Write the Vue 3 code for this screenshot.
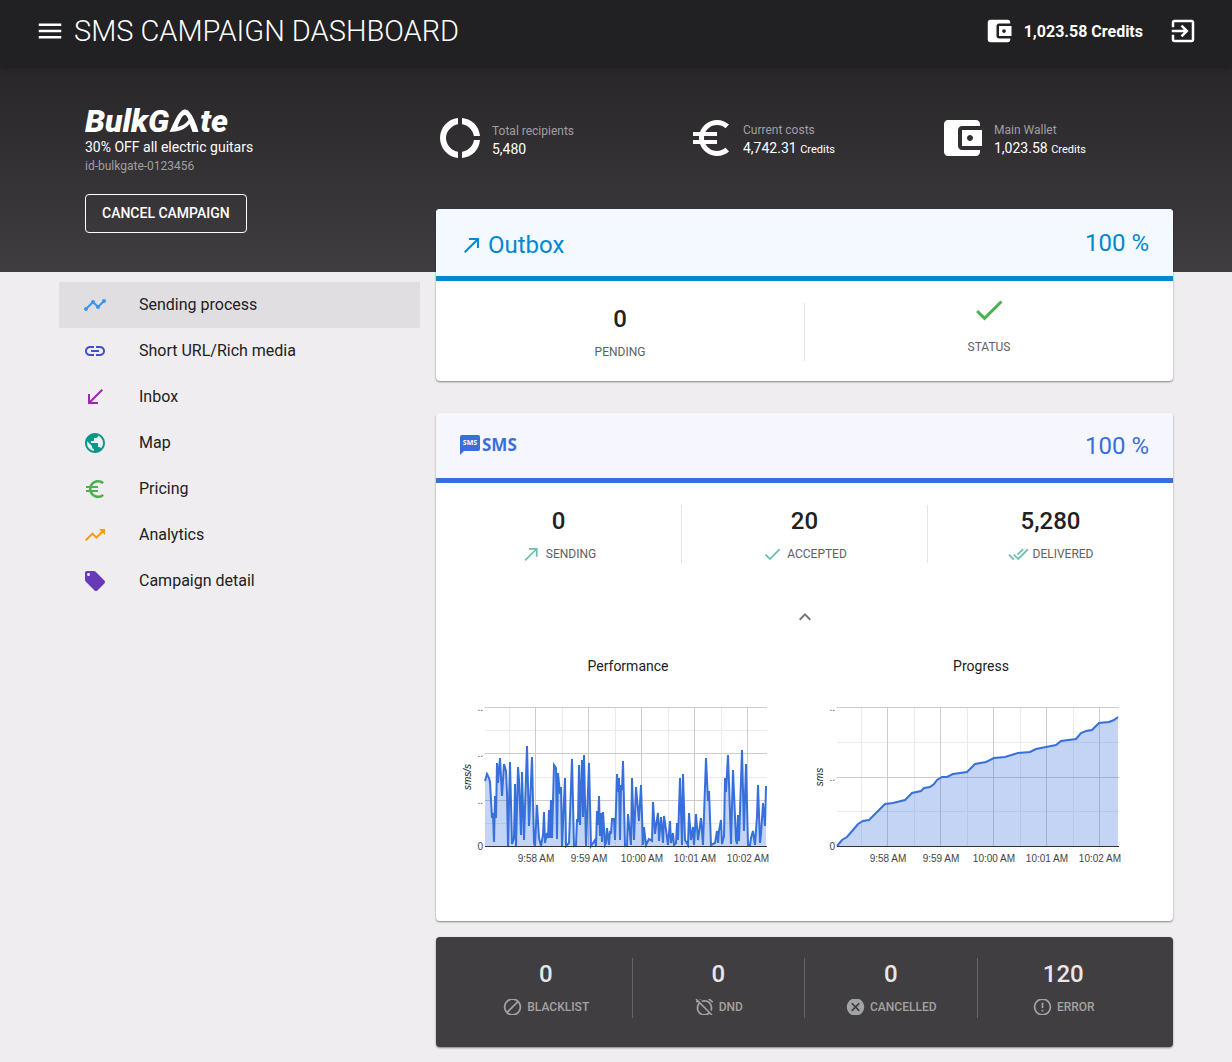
<script setup>
const icons = {
  menu: 'M3 18h18v-2H3v2zm0-5h18v-2H3v2zm0-7v2h18V6H3z',
  wallet: 'M21 18v1c0 1.1-.9 2-2 2H5c-1.11 0-2-.9-2-2V5c0-1.1.89-2 2-2h14c1.1 0 2 .9 2 2v1h-9c-1.11 0-2 .9-2 2v8c0 1.1.89 2 2 2h9zm-9-2h10V8H12v8zm4-2.5c-.83 0-1.5-.67-1.5-1.5s.67-1.5 1.5-1.5 1.5.67 1.5 1.5-.67 1.5-1.5 1.5z',
  exit: 'M10.09 15.59L11.5 17l5-5-5-5-1.41 1.41L12.67 11H3v2h9.67l-2.58 2.59zM19 3H5c-1.11 0-2 .9-2 2v4h2V5h14v14H5v-4H3v4c0 1.1.89 2 2 2h14c1.1 0 2-.9 2-2V5c0-1.1-.9-2-2-2z',
  donut: 'M11 5.08V2c-5 .5-9 4.81-9 10s4 9.5 9 10v-3.08c-3-.48-6-3.4-6-6.92s3-6.44 6-6.92zM18.97 11H22c-.47-5-4-8.53-9-9v3.08C16 5.51 18.54 8 18.97 11zM13 18.92V22c5-.47 8.53-4 9-9h-3.03c-.43 3-2.97 5.49-5.97 5.92z',
  euro: 'M15 18.5c-2.51 0-4.68-1.42-5.76-3.5H15v-2H8.58c-.05-.33-.08-.66-.08-1s.03-.67.08-1H15V9H9.24C10.32 6.92 12.5 5.5 15 5.5c1.61 0 3.09.59 4.23 1.57L21 5.3C19.41 3.87 17.3 3 15 3c-3.92 0-7.24 2.51-8.48 6H3v2h3.06c-.04.33-.06.66-.06 1s.02.67.06 1H3v2h3.52c1.24 3.49 4.56 6 8.48 6 2.31 0 4.41-.87 6-2.3l-1.78-1.77c-1.13.98-2.6 1.57-4.22 1.57z',
  outgoing: 'M9 5v2h6.59L4 18.59 5.41 20 17 8.41V15h2V5z',
  incoming: 'M20 5.41L18.59 4 7 15.59V9H5v10h10v-2H8.41z',
  timeline: 'M23 8c0 1.1-.9 2-2 2-.18 0-.35-.02-.51-.07l-3.56 3.55c.05.16.07.34.07.52 0 1.1-.9 2-2 2s-2-.9-2-2c0-.18.02-.36.07-.52l-2.55-2.55c-.16.05-.34.07-.52.07s-.36-.02-.52-.07l-4.55 4.56c.05.16.07.33.07.51 0 1.1-.9 2-2 2s-2-.9-2-2 .9-2 2-2c.18 0 .35.02.51.07l4.56-4.55C8.02 9.36 8 9.18 8 9c0-1.1.9-2 2-2s2 .9 2 2c0 .18-.02.36-.07.52l2.55 2.55c.16-.05.34-.07.52-.07s.36.02.52.07l3.55-3.56C19.02 8.35 19 8.18 19 8c0-1.1.9-2 2-2s2 .9 2 2z',
  link: 'M3.9 12c0-1.71 1.39-3.1 3.1-3.1h4V7H7c-2.76 0-5 2.24-5 5s2.24 5 5 5h4v-1.9H7c-1.71 0-3.1-1.39-3.1-3.1zM8 13h8v-2H8v2zm9-6h-4v1.9h4c1.71 0 3.1 1.39 3.1 3.1s-1.39 3.1-3.1 3.1h-4V17h4c2.76 0 5-2.24 5-5s-2.24-5-5-5z',
  globe: 'M12 2C6.48 2 2 6.48 2 12s4.48 10 10 10 10-4.48 10-10S17.52 2 12 2zm-1 17.93c-3.95-.49-7-3.85-7-7.93 0-.62.08-1.21.21-1.79L9 15v1c0 1.1.9 2 2 2v1.93zm6.9-2.54c-.26-.81-1-1.39-1.9-1.39h-1v-3c0-.55-.45-1-1-1H8v-2h2c.55 0 1-.45 1-1V7h2c1.1 0 2-.9 2-2v-.41c2.93 1.19 5 4.06 5 7.41 0 2.08-.8 3.97-2.1 5.39z',
  trending: 'M16 6l2.29 2.29-4.88 4.88-4-4L2 16.59 3.41 18l6-6 4 4 6.3-6.29L22 12V6z',
  tag: 'M21.41 11.58l-9-9C12.05 2.22 11.55 2 11 2H4c-1.1 0-2 .9-2 2v7c0 .55.22 1.05.59 1.42l9 9c.36.36.86.58 1.41.58.55 0 1.05-.22 1.41-.59l7-7c.37-.36.59-.86.59-1.41 0-.55-.23-1.06-.59-1.42zM5.5 7C4.67 7 4 6.33 4 5.5S4.67 4 5.5 4 7 4.67 7 5.5 6.33 7 5.5 7z',
  check: 'M9 16.17L4.83 12l-1.42 1.41L9 19 21 7l-1.41-1.41z',
  checkAll: 'M18 7l-1.41-1.41-6.34 6.34 1.41 1.41L18 7zm4.24-1.41L11.66 16.17 7.48 12l-1.41 1.41L11.66 19l12-12-1.42-1.41zM.41 13.41L6 19l1.41-1.41L1.83 12 .41 13.41z',
  collapse: 'M12 8l-6 6 1.41 1.41L12 10.83l4.59 4.58L18 14z',
  blocked: 'M12 2C6.5 2 2 6.5 2 12s4.5 10 10 10 10-4.5 10-10S17.5 2 12 2zM4 12c0-4.4 3.6-8 8-8 1.8 0 3.5.6 4.9 1.7L5.7 16.9C4.6 15.5 4 13.8 4 12zm8 8c-1.8 0-3.5-.6-4.9-1.7L18.3 7.1C19.4 8.5 20 10.2 20 12c0 4.4-3.6 8-8 8z',
  alarmOff: 'M12 6c3.87 0 7 3.13 7 7 0 .84-.16 1.65-.43 2.4l1.52 1.52c.58-1.19.91-2.51.91-3.92 0-4.97-4.03-9-9-9-1.41 0-2.73.33-3.92.91L9.6 6.43C10.35 6.16 11.16 6 12 6zm10-.28l-4.6-3.86-1.29 1.53 4.6 3.86L22 5.72zM2.92 2.29L1.65 3.57 2.98 4.9l-1.11.93 1.42 1.42 1.11-.94.8.8C3.83 8.69 3 10.75 3 13c0 4.97 4.02 9 9 9 2.25 0 4.31-.83 5.89-2.2l2.2 2.2 1.27-1.27L3.89 3.27l-.97-.98zm13.55 16.1C15.26 19.39 13.7 20 12 20c-3.87 0-7-3.13-7-7 0-1.7.61-3.26 1.61-4.47l9.86 9.86zM8.02 3.28L6.6 1.86l-.86.71 1.42 1.42.86-.71z',
  cancel: 'M12 2C6.47 2 2 6.47 2 12s4.47 10 10 10 10-4.47 10-10S17.53 2 12 2zm5 13.59L15.59 17 12 13.41 8.41 17 7 15.59 10.59 12 7 8.41 8.41 7 12 10.59 15.59 7 17 8.41 13.41 12 17 15.59z',
  error: 'M11 15h2v2h-2zm0-8h2v6h-2zm.99-5C6.47 2 2 6.48 2 12s4.47 10 9.99 10C17.52 22 22 17.52 22 12S17.52 2 11.99 2zM12 20c-4.42 0-8-3.58-8-8s3.58-8 8-8 8 3.58 8 8-3.58 8-8 8z',
}

const summary = [
  { icon: 'donut', label: 'Total recipients', value: '5,480' },
  { icon: 'euro', label: 'Current costs', value: '4,742.31', unit: 'Credits' },
  { icon: 'wallet', label: 'Main Wallet', value: '1,023.58', unit: 'Credits' },
]

const nav = [
  { icon: 'timeline', label: 'Sending process', tone: 'blue', active: true },
  { icon: 'link', label: 'Short URL/Rich media', tone: 'indigo' },
  { icon: 'incoming', label: 'Inbox', tone: 'purple' },
  { icon: 'globe', label: 'Map', tone: 'teal' },
  { icon: 'euro', label: 'Pricing', tone: 'green' },
  { icon: 'trending', label: 'Analytics', tone: 'orange' },
  { icon: 'tag', label: 'Campaign detail', tone: 'violet' },
]

const smsCounters = [
  { icon: 'outgoing', label: 'SENDING', value: '0' },
  { icon: 'check', label: 'ACCEPTED', value: '20' },
  { icon: 'checkAll', label: 'DELIVERED', value: '5,280' },
]

const failures = [
  { icon: 'blocked', label: 'BLACKLIST', value: '0' },
  { icon: 'alarmOff', label: 'DND', value: '0' },
  { icon: 'cancel', label: 'CANCELLED', value: '0' },
  { icon: 'error', label: 'ERROR', value: '120' },
]

const performance = [
  [0, 65], [2, 72], [4, 68], [5, 64], [7, 28], [8, 33], [9, 4], [10, 50], [11, 28], [12, 83], [13, 63], [15, 88],
  [17, 50], [19, 82], [21, 75], [22, 53], [23, 0], [25, 84], [27, 2], [29, 8], [30, 62], [31, 0], [33, 79], [34, 66],
  [36, 11], [37, 74], [39, 6], [42, 100], [44, 20], [46, 65], [47, 89], [49, 3], [50, 0], [52, 41], [54, 8], [56, 0],
  [58, 11], [59, 34], [60, 3], [62, 13], [63, 8], [64, 36], [65, 8], [66, 46], [67, 8], [69, 81], [71, 78], [72, 7], [73, 73],
  [75, 52], [76, 59], [77, 0], [80, 68], [81, 0], [84, 3], [87, 87], [89, 0], [91, 1], [92, 27], [93, 24], [94, 81], [95, 21],
  [97, 86], [98, 29], [99, 91], [101, 0], [104, 83], [106, 0], [110, 6], [111, 0], [112, 35], [113, 21], [114, 50],
  [115, 10], [116, 33], [117, 4], [118, 34], [120, 1], [121, 3], [122, 18], [124, 1], [125, 15], [126, 12], [127, 27],
  [129, 27], [130, 6], [132, 72], [133, 54], [134, 68], [135, 6], [136, 61], [137, 56], [138, 85], [140, 0], [142, 1], [143, 32], [146, 1],
  [147, 68], [149, 6], [151, 59], [154, 25], [156, 61], [158, 1], [159, 19], [161, 1], [164, 7], [167, 5], [168, 44],
  [170, 12], [171, 20], [173, 33], [174, 5], [176, 29], [178, 3], [179, 30], [181, 16], [183, 1], [185, 25], [186, 3],
  [188, 13], [189, 1], [191, 3], [192, 23], [193, 6], [195, 68], [197, 1], [198, 72], [200, 6], [203, 1], [204, 33],
  [206, 6], [208, 19], [209, 1], [211, 32], [213, 6], [216, 28], [218, 1], [221, 88], [223, 45], [224, 55], [226, 1],
  [230, 3], [232, 15], [233, 3], [234, 15], [236, 26], [237, 2], [239, 10], [240, 68], [241, 54], [243, 91], [244, 63], [246, 2], [248, 76],
  [251, 6], [252, 2], [253, 31], [254, 5], [257, 96], [259, 15], [261, 82], [263, 1], [265, 1], [266, 8], [268, 15],
  [270, 1], [272, 30], [273, 61], [275, 3], [276, 12], [278, 43], [280, 20], [281, 60],
]

const progress = [
  [0, 0], [5, 6], [10, 9], [16, 16], [21, 22], [26, 25], [32, 26], [39, 33], [48, 42], [56, 43], [68, 46], [75, 53],
  [84, 55], [87, 58], [93, 59], [97, 62], [100, 66], [105, 69], [110, 69], [116, 72], [130, 74], [138, 82], [149, 84],
  [157, 88], [168, 89], [181, 93], [193, 94], [199, 97], [209, 99], [219, 101], [224, 105], [239, 107], [244, 113],
  [249, 115], [255, 116], [262, 123], [272, 124], [277, 126], [281, 129],
]

const times = ['9:58 AM', '9:59 AM', '10:00 AM', '10:01 AM', '10:02 AM']

const charts = [
  { title: 'Performance', unit: 'sms/s', data: performance, left: 33, major: [17, 63, 110], minor: [40, 87, 133] },
  { title: 'Progress', unit: 'sms', data: progress, left: 32, major: [17, 87], minor: [52, 121] },
]

const baseline = 156
const line = (c) => c.data.map(([x, h]) => `${c.left + x},${baseline - h}`).join(' ')
const area = (c) => `${c.left},${baseline} ${line(c)} ${c.left + 281},${baseline}`
</script>

<template>
  <div class="page">
    <header class="topbar">
      <button class="plain" type="button" aria-label="Menu">
        <svg class="icon-30" viewBox="0 0 24 24"><path :d="icons.menu" /></svg>
      </button>
      <h1>SMS CAMPAIGN DASHBOARD</h1>
      <div class="balance">
        <svg class="icon-30" viewBox="0 0 24 24"><path :d="icons.wallet" /></svg>
        <span>1,023.58 Credits</span>
      </div>
      <a class="exit" href="#" aria-label="Sign out">
        <svg class="icon-30" viewBox="0 0 24 24"><path :d="icons.exit" /></svg>
      </a>
    </header>

    <section class="hero columns">
      <div class="campaign">
        <div class="logo" aria-label="BulkGate">
          <span>BulkG</span>
          <svg viewBox="0 0 30 24" aria-hidden="true">
            <path d="M0 23C4 14 8 5 12 2C14 0 17 0 19 2C23 6 27 15 29 23H23C22 20 21 17 20 15C16 20 9 23 0 23ZM8 18C12 17 16 15 19 11C18 8 17 6 15 6C13 6 10 12 8 18Z" />
          </svg>
          <span>te</span>
        </div>
        <p class="offer">30% OFF all electric guitars</p>
        <p class="campaign-id">id-bulkgate-0123456</p>
        <button class="cancel" type="button">CANCEL CAMPAIGN</button>
      </div>
      <div class="summary">
        <div v-for="s in summary" :key="s.label" class="summary-item">
          <svg viewBox="0 0 24 24"><path :d="icons[s.icon]" /></svg>
          <div class="summary-text">
            <p class="summary-label">{{ s.label }}</p>
            <p class="summary-value">{{ s.value }} <small v-if="s.unit">{{ s.unit }}</small></p>
          </div>
        </div>
      </div>
    </section>

    <div class="columns">
      <nav class="sidebar">
        <a v-for="n in nav" :key="n.label" href="#" :class="{ active: n.active }">
          <svg :class="n.tone" viewBox="0 0 24 24"><path :d="icons[n.icon]" /></svg>
          <span>{{ n.label }}</span>
        </a>
      </nav>

      <main>
        <section class="card outbox">
          <div class="card-head">
            <h2>
              <svg viewBox="0 0 24 24"><path :d="icons.outgoing" /></svg>
              <span>Outbox</span>
            </h2>
            <span class="percent">100 %</span>
          </div>
          <div class="counters">
            <div class="counter">
              <strong>0</strong>
              <span class="label">PENDING</span>
            </div>
            <div class="counter status">
              <svg viewBox="0 0 24 24"><path :d="icons.check" /></svg>
              <span class="label">STATUS</span>
            </div>
          </div>
        </section>

        <section class="card sms">
          <div class="card-head">
            <h2>
              <svg class="bubble" viewBox="0 0 20 20" aria-hidden="true">
                <path d="M2 0H18a2 2 0 0 1 2 2V14a2 2 0 0 1-2 2H4L0 20V2a2 2 0 0 1 2-2Z" />
                <text x="10" y="10" text-anchor="middle">SMS</text>
              </svg>
              <span>SMS</span>
            </h2>
            <span class="percent">100 %</span>
          </div>
          <div class="counters">
            <div v-for="c in smsCounters" :key="c.label" class="counter">
              <strong>{{ c.value }}</strong>
              <span class="label">
                <svg viewBox="0 0 24 24" preserveAspectRatio="xMidYMid slice"><path :d="icons[c.icon]" /></svg>
                {{ c.label }}
              </span>
            </div>
          </div>
          <button class="plain collapse" type="button" aria-label="Collapse">
            <svg viewBox="0 0 24 24"><path :d="icons.collapse" /></svg>
          </button>
          <div class="charts">
            <figure v-for="c in charts" :key="c.title">
              <figcaption>{{ c.title }}</figcaption>
              <svg viewBox="0 0 352 180" role="img" :aria-label="c.title">
                <g class="minor">
                  <rect v-for="i in 5" :key="'v' + i" :x="c.left + 53 * i - 29" y="17" width="1" height="139" />
                  <rect v-for="y in c.minor" :key="'h' + y" :x="c.left" :y="y" width="282" height="1" />
                </g>
                <g class="major">
                  <rect v-for="i in 5" :key="'v' + i" :x="c.left + 53 * i - 3" y="17" width="1" height="139" />
                  <rect v-for="y in c.major" :key="'h' + y" :x="c.left" :y="y" width="282" height="1" />
                </g>
                <polygon class="area" :points="area(c)" />
                <polyline class="line" :points="line(c)" />
                <rect class="axis" :x="c.left" y="156" width="282" height="1" />
                <text v-for="y in c.major" :key="'t' + y" :x="c.left - 2" :y="y + 4" text-anchor="end">..</text>
                <text :x="c.left - 2" y="160" text-anchor="end">0</text>
                <text v-for="(t, i) in times" :key="t" :x="c.left + 51 + 53 * i" y="172" text-anchor="middle">{{ t }}</text>
                <text class="unit" :transform="`translate(${c.left - 14} 87) rotate(-90)`" text-anchor="middle">{{ c.unit }}</text>
              </svg>
            </figure>
          </div>
        </section>

        <section class="card failures">
          <div class="counters">
            <div v-for="f in failures" :key="f.label" class="counter">
              <strong>{{ f.value }}</strong>
              <span class="label">
                <svg viewBox="0 0 24 24" preserveAspectRatio="xMidYMid slice"><path :d="icons[f.icon]" /></svg>
                {{ f.label }}
              </span>
            </div>
          </div>
        </section>
      </main>
    </div>
  </div>
</template>

<style>
body {
  background: #efedef;
}
</style>

<style scoped>
.page {
  font-family: Roboto, "Liberation Sans", sans-serif;
  font-size: 14px;
  color: #212121;
}

.page * {
  box-sizing: border-box;
}

h1,
h2,
p,
figure {
  margin: 0;
}

svg {
  display: block;
  flex: none;
  fill: currentColor;
}

.plain {
  padding: 0;
  border: 0;
  background: none;
  color: inherit;
}

.icon-30 {
  width: 30px;
  height: 30px;
}

.topbar {
  position: relative;
  display: flex;
  align-items: center;
  height: 66px;
  padding: 0 34px 4px 35px;
  background: #212022;
  color: #fff;
  box-shadow: 0 1px 5px rgba(0, 0, 0, 0.35);
}

.topbar h1 {
  margin-left: 9px;
  font-size: 29px;
  font-weight: 300;
  line-height: 36px;
}

.balance {
  display: flex;
  align-items: center;
  gap: 10px;
  margin-left: auto;
  font-size: 16px;
  font-weight: 700;
}

.exit {
  margin-left: 25px;
  color: inherit;
}

.columns {
  display: grid;
  grid-template-columns: minmax(0, 361fr) minmax(0, 737fr);
  column-gap: 16px;
  padding: 0 59px;
}

.hero {
  padding-top: 38px;
  padding-bottom: 39px;
  background: linear-gradient(#282629, #3f3d40);
  color: #fff;
}

.campaign {
  padding-left: 26px;
}

.logo {
  display: flex;
  align-items: center;
  height: 33px;
  font-size: 32px;
  font-style: italic;
  font-weight: 900;
  line-height: 32px;
}

.logo svg {
  width: 31px;
  height: 24px;
}

.offer {
  font-size: 14px;
  line-height: 20px;
}

.campaign-id {
  font-size: 12px;
  line-height: 18px;
  color: #a09fa1;
}

.cancel {
  height: 39px;
  margin-top: 19px;
  padding: 0 16px 2px;
  border: 1px solid #fff;
  border-radius: 4px;
  background: none;
  color: #fff;
  font: 500 14px Roboto, "Liberation Sans", sans-serif;
}

.summary {
  display: grid;
  grid-template-columns: repeat(3, minmax(0, 1fr));
  gap: 16px;
  align-items: start;
  padding-top: 10px;
}

.summary-item {
  display: flex;
  align-items: center;
  gap: 8px;
}

.summary-item svg {
  width: 48px;
  height: 48px;
}

.summary-text {
  padding-top: 4px;
}

.summary-label {
  font-size: 12px;
  line-height: 18px;
  color: #a09fa1;
}

.summary-value {
  line-height: 18px;
}

.summary-value small {
  font-size: 11px;
}

.sidebar {
  padding-top: 10px;
}

.sidebar a {
  display: flex;
  align-items: center;
  gap: 32px;
  height: 46px;
  padding: 0 24px;
  color: #212121;
  font-size: 16px;
  text-decoration: none;
}

.sidebar a.active {
  background: #e0dee1;
}

.sidebar span {
  padding-bottom: 2px;
}

.sidebar svg {
  width: 24px;
  height: 24px;
}

.blue { color: #3896ee; }
.indigo { color: #3f51c5; }
.purple { color: #9c27b0; }
.teal { color: #0b968a; }
.green { color: #4caf50; }
.orange { color: #f8981d; }
.violet { color: #673ab7; }

main {
  margin-top: -63px;
  padding-bottom: 15px;
}

.card {
  border-radius: 4px;
  background: #fff;
  box-shadow: 0 1px 2px rgba(0, 0, 0, 0.45);
}

.card-head {
  display: flex;
  align-items: center;
  justify-content: space-between;
  padding: 0 24px;
  border-bottom: 5px solid currentColor;
  border-radius: 4px 4px 0 0;
}

.card-head h2 {
  display: flex;
  align-items: center;
}

.percent {
  font-size: 24px;
}

.outbox {
  margin-bottom: 32px;
  padding-bottom: 20px;
}

.outbox .card-head {
  height: 72px;
  background: #f3f9ff;
  color: #0288d1;
}

.outbox h2 {
  gap: 4px;
  padding-top: 4px;
  font-size: 24px;
  font-weight: 400;
}

.outbox h2 svg {
  width: 24px;
  height: 24px;
}

.sms {
  margin-bottom: 16px;
  padding-bottom: 51px;
}

.sms .card-head {
  height: 70px;
  background: #f6f6ff;
  color: #3770db;
}

.sms h2 {
  gap: 2px;
  padding-bottom: 2px;
  font: 700 17px "Open Sans", "Noto Sans", sans-serif;
}

.bubble {
  width: 20px;
  height: 20px;
}

.bubble text {
  font: 700 7px "Open Sans", "Noto Sans", sans-serif;
  fill: #fff;
}

.counters {
  display: flex;
  padding-top: 22px;
}

.counter {
  display: flex;
  flex: 1 1 0;
  flex-direction: column;
  align-items: center;
  gap: 8px;
}

.counter:not(:last-child) {
  border-right: 1px solid #e4e4e4;
}

.counter strong {
  font-size: 24px;
  font-weight: 500;
  line-height: 32px;
}

.label {
  display: flex;
  align-items: center;
  gap: 4px;
  font-size: 12px;
  line-height: 18px;
  color: #616161;
}

.label svg {
  width: 21px;
  height: 16px;
  color: #69c0ae;
}

.counter.status {
  gap: 10px;
}

.status svg {
  width: 36px;
  height: 36px;
  margin-top: -11px;
  color: #4caf50;
}

.collapse {
  display: block;
  margin: 42px auto 27px;
  color: #757575;
}

.collapse svg {
  width: 24px;
  height: 24px;
}

.charts {
  display: grid;
  grid-template-columns: repeat(2, minmax(0, 1fr));
  gap: 1px;
  padding: 0 16px;
}

figcaption {
  margin-bottom: 14px;
  font-size: 14px;
  line-height: 20px;
  text-align: center;
}

figure svg {
  width: 100%;
}

figure text {
  font: 10px "Liberation Sans", Arial, sans-serif;
  fill: #444;
}

figure .unit {
  font-style: italic;
  fill: #222;
}

.minor { fill: #ebebeb; }
.major { fill: #ccc; }
.axis { fill: #333; }

.area {
  fill: #3770db;
  fill-opacity: 0.3;
}

.line {
  fill: none;
  stroke: #3770db;
  stroke-width: 2;
}

.failures {
  padding: 0 24px 29px;
  background: #403e41;
}

.failures .counters {
  padding-top: 21px;
}

.failures .counter {
  gap: 8px;
  padding-bottom: 2px;
}

.failures .counter:not(:last-child) {
  border-color: #656366;
}

.failures strong {
  color: #e8e6e9;
}

.failures .label,
.failures .label svg {
  color: #a3a2a4;
}

.failures .label {
  font-weight: 500;
}
</style>
